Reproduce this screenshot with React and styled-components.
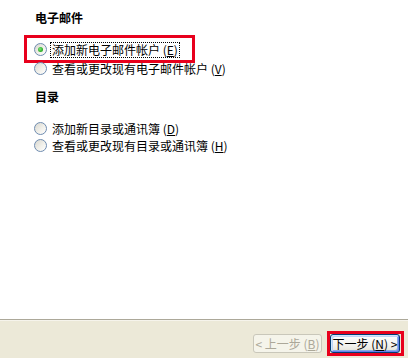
import React from "react";
import styled, { createGlobalStyle } from "styled-components";

const Global = createGlobalStyle`
  html, body { margin: 0; padding: 0; background: #fff; }
  body { font-family: "Noto Sans CJK SC", "Liberation Sans", sans-serif; font-size: 12px; color: #000; }
`;

const Page = styled.div`
  width: 408px;
  height: 358px;
  display: flex;
  flex-direction: column;
  overflow: hidden;
`;

const Main = styled.div`
  height: 319px;
  box-sizing: border-box;
  padding: 11px 0 0 34px;
  display: flex;
  flex-direction: column;
  background: #fff;
`;

const Heading = styled.div`
  font-weight: 700;
  font-size: 12px;
  line-height: 14px;
  height: 14px;
  margin: ${(p) => p.$mt || 0}px 0 0 1px;
`;

const Options = styled.div`
  display: flex;
  flex-direction: column;
  margin-top: ${(p) => p.$mt}px;
  gap: ${(p) => p.$gap}px;
`;

const Row = styled.label`
  position: relative;
  display: flex;
  align-items: center;
  gap: 3px;
  height: 17px;
  line-height: 17px;
  white-space: nowrap;
  ${(p) =>
    p.$marked &&
    `
    &::after {
      content: "";
      position: absolute;
      top: -6px;
      bottom: -5px;
      left: -10px;
      width: 171px;
      box-sizing: border-box;
      border: 3px solid #e8001c;
      pointer-events: none;
    }
  `}
`;

const Radio = styled.span`
  width: 13px;
  height: 13px;
  box-sizing: border-box;
  border-radius: 50%;
  border: 1px solid #6f8cb0;
  background: linear-gradient(135deg, #d8d7cf 0%, #f1f0ea 55%, #ffffff 100%);
  display: flex;
  align-items: center;
  justify-content: center;
  flex: none;
  &::before {
    content: "";
    display: ${(p) => (p.$checked ? "block" : "none")};
    width: 5px;
    height: 5px;
    border-radius: 50%;
    background: radial-gradient(circle at 40% 40%, #7ee37a 0%, #2fb12c 60%, #1f8f1c 100%);
  }
`;

const Label = styled.span`
  padding: 0 1px;
  line-height: 14px;
  border: 1px dotted ${(p) => (p.$focus ? "#000" : "transparent")};
`;

const Footer = styled.div`
  flex: 1;
  background: #ece9d8;
  border-top: 1px solid #aca899;
  box-shadow: inset 0 1px 0 #f6f4ec;
  display: flex;
  justify-content: flex-end;
  align-items: flex-start;
  gap: 8px;
  padding: 14px 8px 0 0;
  box-sizing: border-box;
`;

const Button = styled.button`
  position: relative;
  width: ${(p) => p.$w}px;
  height: 19px;
  padding: 0;
  margin: 0;
  border-radius: 3px;
  font-family: "Noto Sans CJK SC", "Liberation Sans", sans-serif;
  font-size: 12px;
  line-height: 17px;
  white-space: nowrap;
  border: 1px solid ${(p) => (p.disabled ? "#c9c7ba" : "#003c74")};
  color: ${(p) => (p.disabled ? "#aca899" : "#000")};
  background: ${(p) =>
    p.disabled
      ? "#f5f4ea"
      : "linear-gradient(#ffffff 0%, #f3f3ef 60%, #e3e1d8 100%)"};
  box-shadow: ${(p) =>
    p.$default
      ? "inset 1px 1px 0 #cee7ff, inset -1px -1px 0 #6982ee, inset 2px 2px 0 #bcd4f6, inset -2px -2px 0 #89ade4"
      : "none"};
  ${(p) =>
    p.$marked &&
    `
    &::after {
      content: "";
      position: absolute;
      top: -4px;
      bottom: -4px;
      left: -4px;
      right: -5px;
      border: 3px solid #e8001c;
      pointer-events: none;
    }
  `}
`;

const options1 = [
  { text: "添加新电子邮件帐户", key: "E", checked: true },
  { text: "查看或更改现有电子邮件帐户", key: "V" },
];
const options2 = [
  { text: "添加新目录或通讯簿", key: "D" },
  { text: "查看或更改现有目录或通讯簿", key: "H" },
];

function Option({ o, marked }) {
  return (
    <Row $marked={marked}>
      <Radio $checked={o.checked} />
      <Label $focus={o.checked}>
        {o.text} (<u>{o.key}</u>)
      </Label>
    </Row>
  );
}

export default function App() {
  return (
    <Page>
      <Global />
      <Main>
        <Heading>电子邮件</Heading>
        <Options $mt={16} $gap={2}>
          {options1.map((o, i) => (
            <Option key={o.key} o={o} marked={i === 0} />
          ))}
        </Options>
        <Heading $mt={13}>目录</Heading>
        <Options $mt={16} $gap={0}>
          {options2.map((o) => (
            <Option key={o.key} o={o} />
          ))}
        </Options>
      </Main>
      <Footer>
        <Button disabled $w={69}>
          &lt; 上一步 (<u>B</u>)
        </Button>
        <Button $w={70} $default $marked>
          下一步 (<u>N</u>) &gt;
        </Button>
      </Footer>
    </Page>
  );
}
